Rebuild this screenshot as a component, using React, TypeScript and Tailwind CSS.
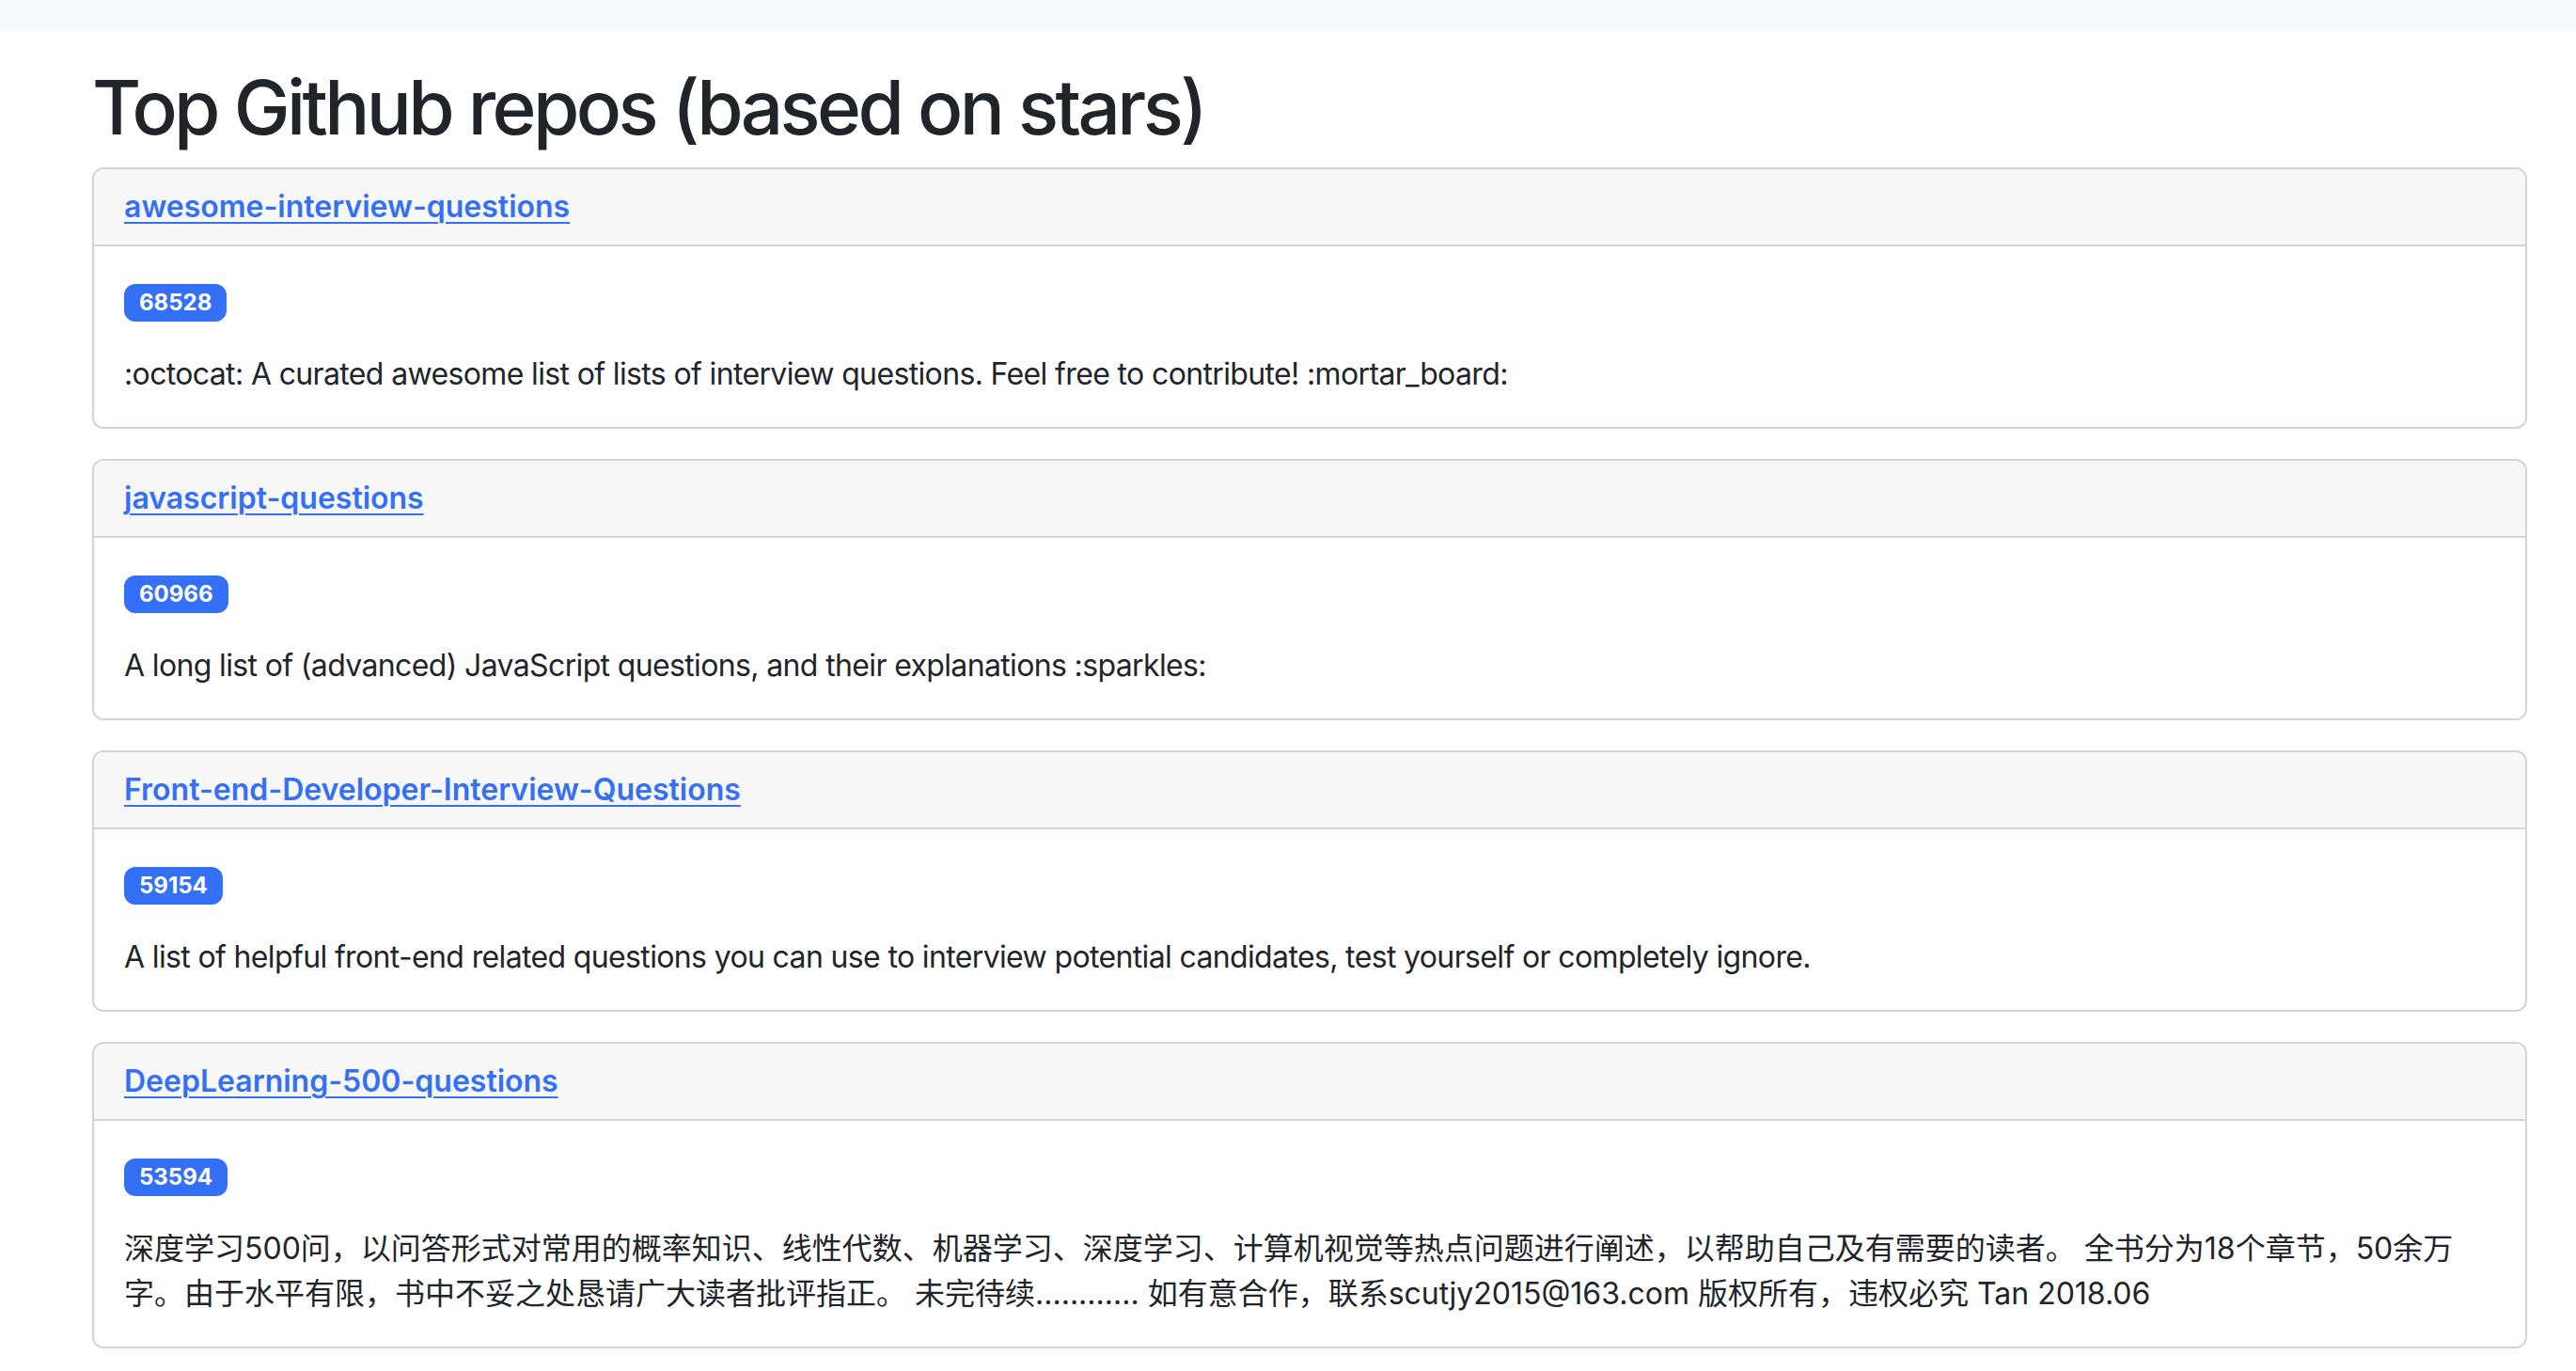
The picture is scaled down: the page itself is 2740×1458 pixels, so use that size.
import React from "react";

interface Repo {
  name: string;
  stars: number;
  description: string;
  cjk?: boolean;
}

const repos: Repo[] = [
  {
    name: "awesome-interview-questions",
    stars: 68528,
    description:
      ":octocat: A curated awesome list of lists of interview questions. Feel free to contribute! :mortar_board:",
  },
  {
    name: "javascript-questions",
    stars: 60966,
    description:
      "A long list of (advanced) JavaScript questions, and their explanations :sparkles:",
  },
  {
    name: "Front-end-Developer-Interview-Questions",
    stars: 59154,
    description:
      "A list of helpful front-end related questions you can use to interview potential candidates, test yourself or completely ignore.",
  },
  {
    name: "DeepLearning-500-questions",
    stars: 53594,
    cjk: true,
    description:
      "深度学习500问，以问答形式对常用的概率知识、线性代数、机器学习、深度学习、计算机视觉等热点问题进行阐述，以帮助自己及有需要的读者。 全书分为18个章节，50余万字。由于水平有限，书中不妥之处恳请广大读者批评指正。 未完待续............ 如有意合作，联系scutjy2015@163.com 版权所有，违权必究 Tan 2018.06",
  },
];

// Single repo card: header with link, body with star badge and description
const RepoCard = ({ repo }: { repo: Repo }) => (
  <div className="mb-[32px] overflow-hidden rounded-[12px] border-2 border-[#d4d4d4] bg-white">
    <div className="border-b-2 border-[#d4d4d4] bg-[#f7f7f7] px-[32px] py-[16px] text-[32px] leading-[48px]">
      <a
        href="#"
        className="font-semibold text-[#3370f5] underline decoration-2 underline-offset-[5px]"
      >
        {repo.name}
      </a>
    </div>
    <div className="p-[32px] text-[32px] leading-[48px]">
      <div className="mb-[32px] h-[48px]">
        <span className="inline-block rounded-[12px] bg-[#3370f5] px-[16px] py-[8px] align-[-1px] text-[24px] font-bold leading-[24px] text-white">
          {repo.stars}
        </span>
      </div>
      <p
        className={
          repo.cjk
            ? "text-[#212529] tracking-normal"
            : "text-[#212529] tracking-[-0.64px]"
        }
      >
        {repo.description}
      </p>
    </div>
  </div>
);

export default function App() {
  return (
    <div className="min-h-screen bg-white text-[#212529] [font-family:Inter,'Noto_Sans_CJK_SC',sans-serif]">
      {/* top bar */}
      <div className="h-[33px] bg-[#f8f9fa]" />

      <main className="pl-[98px] pr-[52px] pt-[33px]">
        <h1 className="mb-[16px] text-[80px] font-medium leading-[96px] tracking-[-3.6px]">
          Top Github repos (based on stars)
        </h1>

        <div>
          {repos.map((repo) => (
            <RepoCard key={repo.name} repo={repo} />
          ))}
        </div>
      </main>
    </div>
  );
}
